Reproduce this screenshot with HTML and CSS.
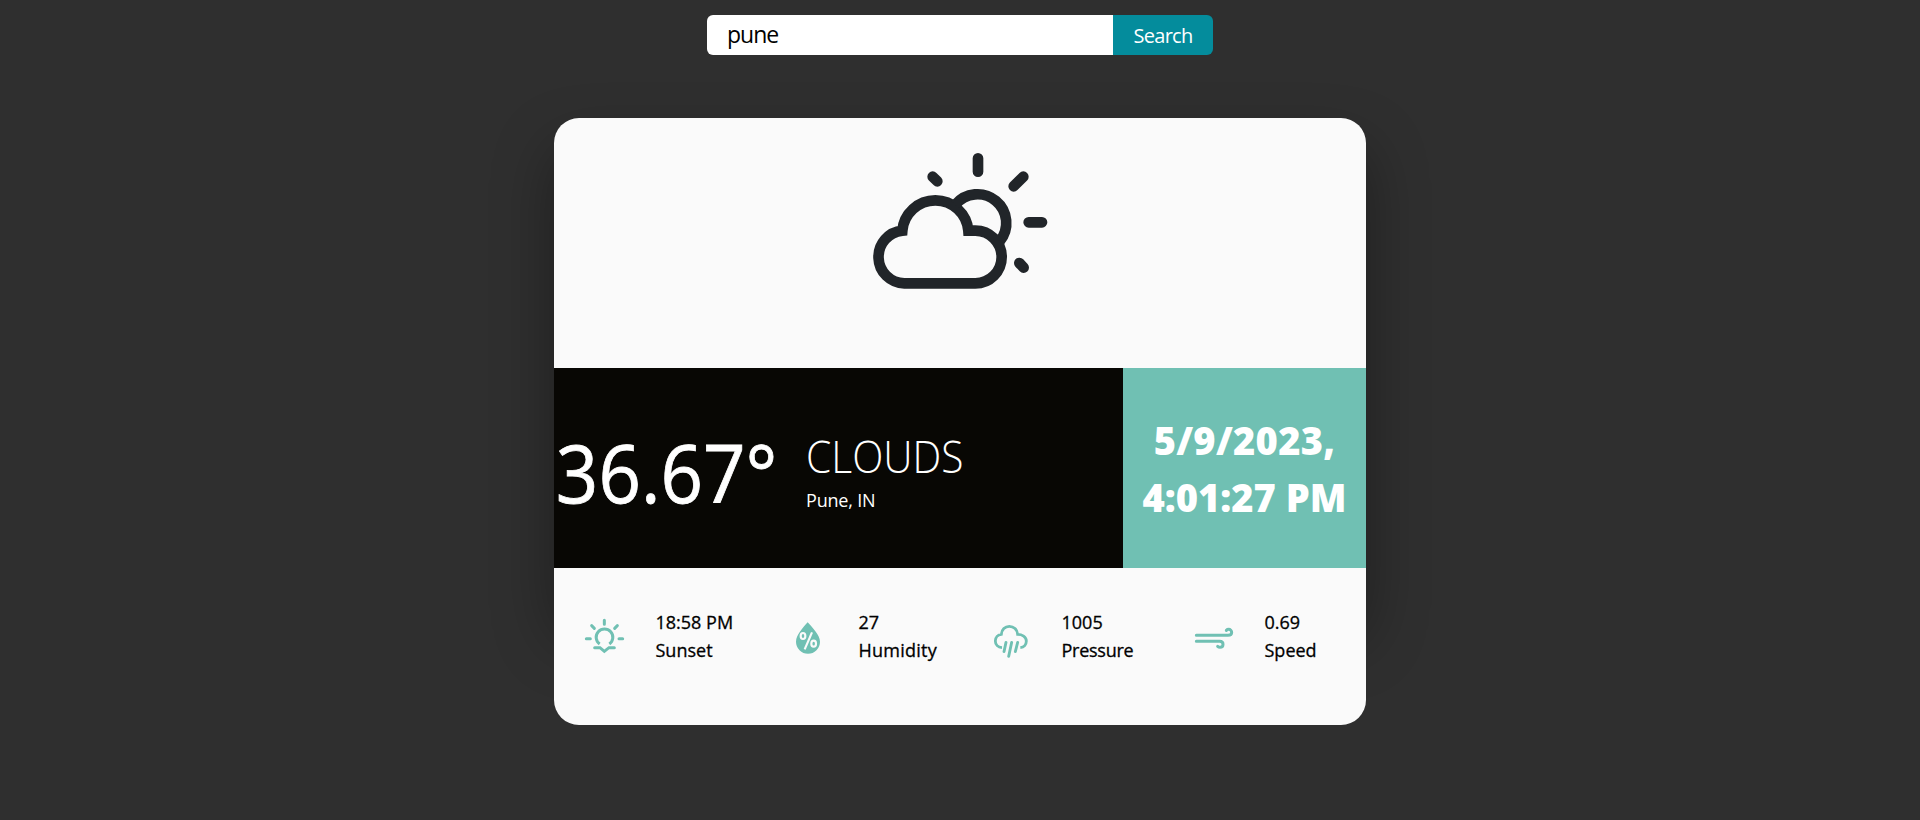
FILE: index.html
```
<!DOCTYPE html>
<html lang="en">
<head>
<meta charset="utf-8">
<title>Weather</title>
<link rel="stylesheet" href="styles.css">
</head>
<body>
<form class="search">
  <input class="search-input" type="text" value="pune" aria-label="City">
  <button class="search-button" type="button">Search</button>
</form>
<main class="card">
  <section class="sky">
    <svg class="sky-icon" viewBox="0 0 660 480" fill="none" stroke="currentColor" stroke-width="32">
      <path d="M376 430H163A79.200 79.200 0 0 1 157 272A99.350 99.350 0 0 1 355 272H376A79 79 0 0 1 376 430Z"/>
      <path d="M316 194A86 86 0 1 1 449 304"/>
      <path stroke-linecap="round" d="M384 55V95M536 247H576M520 110L491 139M248 110L262 124M508 369L521 383"/>
    </svg>
  </section>
  <section class="now">
    <div class="reading">
      <div class="temp">36.67°</div>
      <div class="place">
        <div class="condition">CLOUDS</div>
        <div class="city">Pune, IN</div>
      </div>
    </div>
    <div class="date"><span class="day">5/9/2023,</span><span class="time">4:01:27 PM</span></div>
  </section>
  <section class="stats">
    <div class="stat">
      <svg class="stat-icon" viewBox="0 0 285 270" fill="none" stroke="currentColor" stroke-width="9" stroke-linecap="round">
        <path d="M133 91V103M79 146H91M177 146H188M95 107L103 115M172 107L164 115M104 173H120L133 184L147 173H163"/>
        <path stroke-width="9" stroke-linecap="butt" d="M119 162A25 25 0 1 1 148 162"/>
      </svg>
      <div class="stat-text"><div>18:58 PM</div><div>Sunset</div></div>
    </div>
    <div class="stat">
      <svg class="stat-icon" viewBox="-21 0 285 270" fill="none">
        <path fill="currentColor" d="M113 97C127 113 150 135 150 155A36 36 0 0 1 78 155C78 135 99 113 113 97Z"/>
        <g stroke="#fafafa" stroke-width="6.500"><ellipse cx="99" cy="138" rx="7" ry="9"/><ellipse cx="131" cy="161" rx="7" ry="9"/><path d="M126 127L104 178"/></g>
      </svg>
      <div class="stat-text"><div>27</div><div class="humidity">Humidity</div></div>
    </div>
    <div class="stat">
      <svg class="stat-icon" viewBox="-12 0 285 270" fill="none" stroke="currentColor" stroke-width="8.500" stroke-linecap="round">
        <path stroke-linecap="butt" d="M96 173C84 172 76 163 76 153C76 142 84 134 94 133C95 119 105 109 118 109C131 109 142 119 143 133C156 133 169 140 169 153C169 163 162 172 151 173"/>
        <path d="M108 157L102 185M125 157L116 199M143 157L136 185"/>
      </svg>
      <div class="stat-text"><div>1005</div><div class="pressure">Pressure</div></div>
    </div>
    <div class="stat">
      <svg class="stat-icon" viewBox="-3 0 285 270" fill="none" stroke="currentColor" stroke-width="9" stroke-linecap="round">
        <path d="M79 136H174C181 136 185 132 185 127C185 122 181 118 176 118C173 118 171 119 169 121M79 154H149C155 154 159 158 159 163C159 169 155 172 150 172C147 172 145 171 143 169"/>
      </svg>
      <div class="stat-text"><div>0.69</div><div>Speed</div></div>
    </div>
  </section>
</main>
</body>
</html>
```
FILE: styles.css
```
* { box-sizing: border-box; }
body {
  margin: 0;
  height: 820px;
  padding-top: 15px;
  overflow: hidden;
  background: #2f2f2f;
  font-family: "Open Sans", "Noto Sans", sans-serif;
  color: #000;
}
.search {
  display: flex;
  width: 506px;
  height: 40px;
  margin: 0 auto;
  border-radius: 6px;
  overflow: hidden;
}
.search-input {
  width: 406px;
  padding: 0 20px 2px;
  border: 0;
  background: #fff;
  font: 23px "Open Sans", sans-serif;
  letter-spacing: -1px;
  color: #000;
}
.search-button {
  width: 100px;
  padding: 1px 0 0;
  border: 0;
  background: #048c9c;
  font: 20px "Open Sans", sans-serif;
  letter-spacing: -0.7px;
  color: #fff;
}
.card {
  position: relative;
  width: 812px;
  height: 607px;
  margin: 63px auto 0;
  border-radius: 25px;
  background: #fafafa;
}
.card::before {
  content: "";
  position: absolute;
  z-index: -1;
  inset: 30px 0 85px;
  border-radius: 25px;
  box-shadow: 0 0 60px rgba(0, 0, 0, 0.35);
}
.sky {
  display: flex;
  justify-content: center;
  height: 250px;
  padding-top: 22px;
}
.sky-icon { width: 220px; height: 160px; color: #212529; }
.now { display: flex; height: 200px; color: #fff; }
.reading {
  display: flex;
  align-items: center;
  width: 569px;
  background: #080704;
}
.temp {
  width: 252px;
  padding: 7px 0 0 2px;
  font-size: 80px;
  line-height: 100px;
  white-space: nowrap;
  transform: scaleX(0.93);
  transform-origin: left;
  -webkit-text-stroke: 0.8px #fff;
}
.condition {
  font-size: 44px;
  line-height: 56px;
  font-weight: 300;
  transform: scaleX(0.925);
  transform-origin: left;
}
.city { font-size: 18px; line-height: 33px; letter-spacing: -0.2px; }
.place { padding-top: 8px; }
.date {
  display: flex;
  flex-direction: column;
  justify-content: center;
  align-items: center;
  width: 243px;
  padding-top: 2px;
  background: #70c0b3;
  font-size: 38px;
  font-weight: 800;
  line-height: 57px;
  white-space: nowrap;
}
.day { letter-spacing: 0.3px; }
.stats { display: grid; grid-template-columns: repeat(4, 203px); padding-top: 22px; }
.stat {
  display: flex;
  align-items: center;
  padding-left: 6px;
  font-size: 18px;
  line-height: 28px;
  -webkit-text-stroke: 0.3px #000;
}
.stat-text { padding: 2px 0 0 0.5px; }
.humidity { letter-spacing: 0.25px; }
.pressure { letter-spacing: -0.25px; }
.stat-icon { width: 95px; height: 90px; color: #70c0b3; }
```
